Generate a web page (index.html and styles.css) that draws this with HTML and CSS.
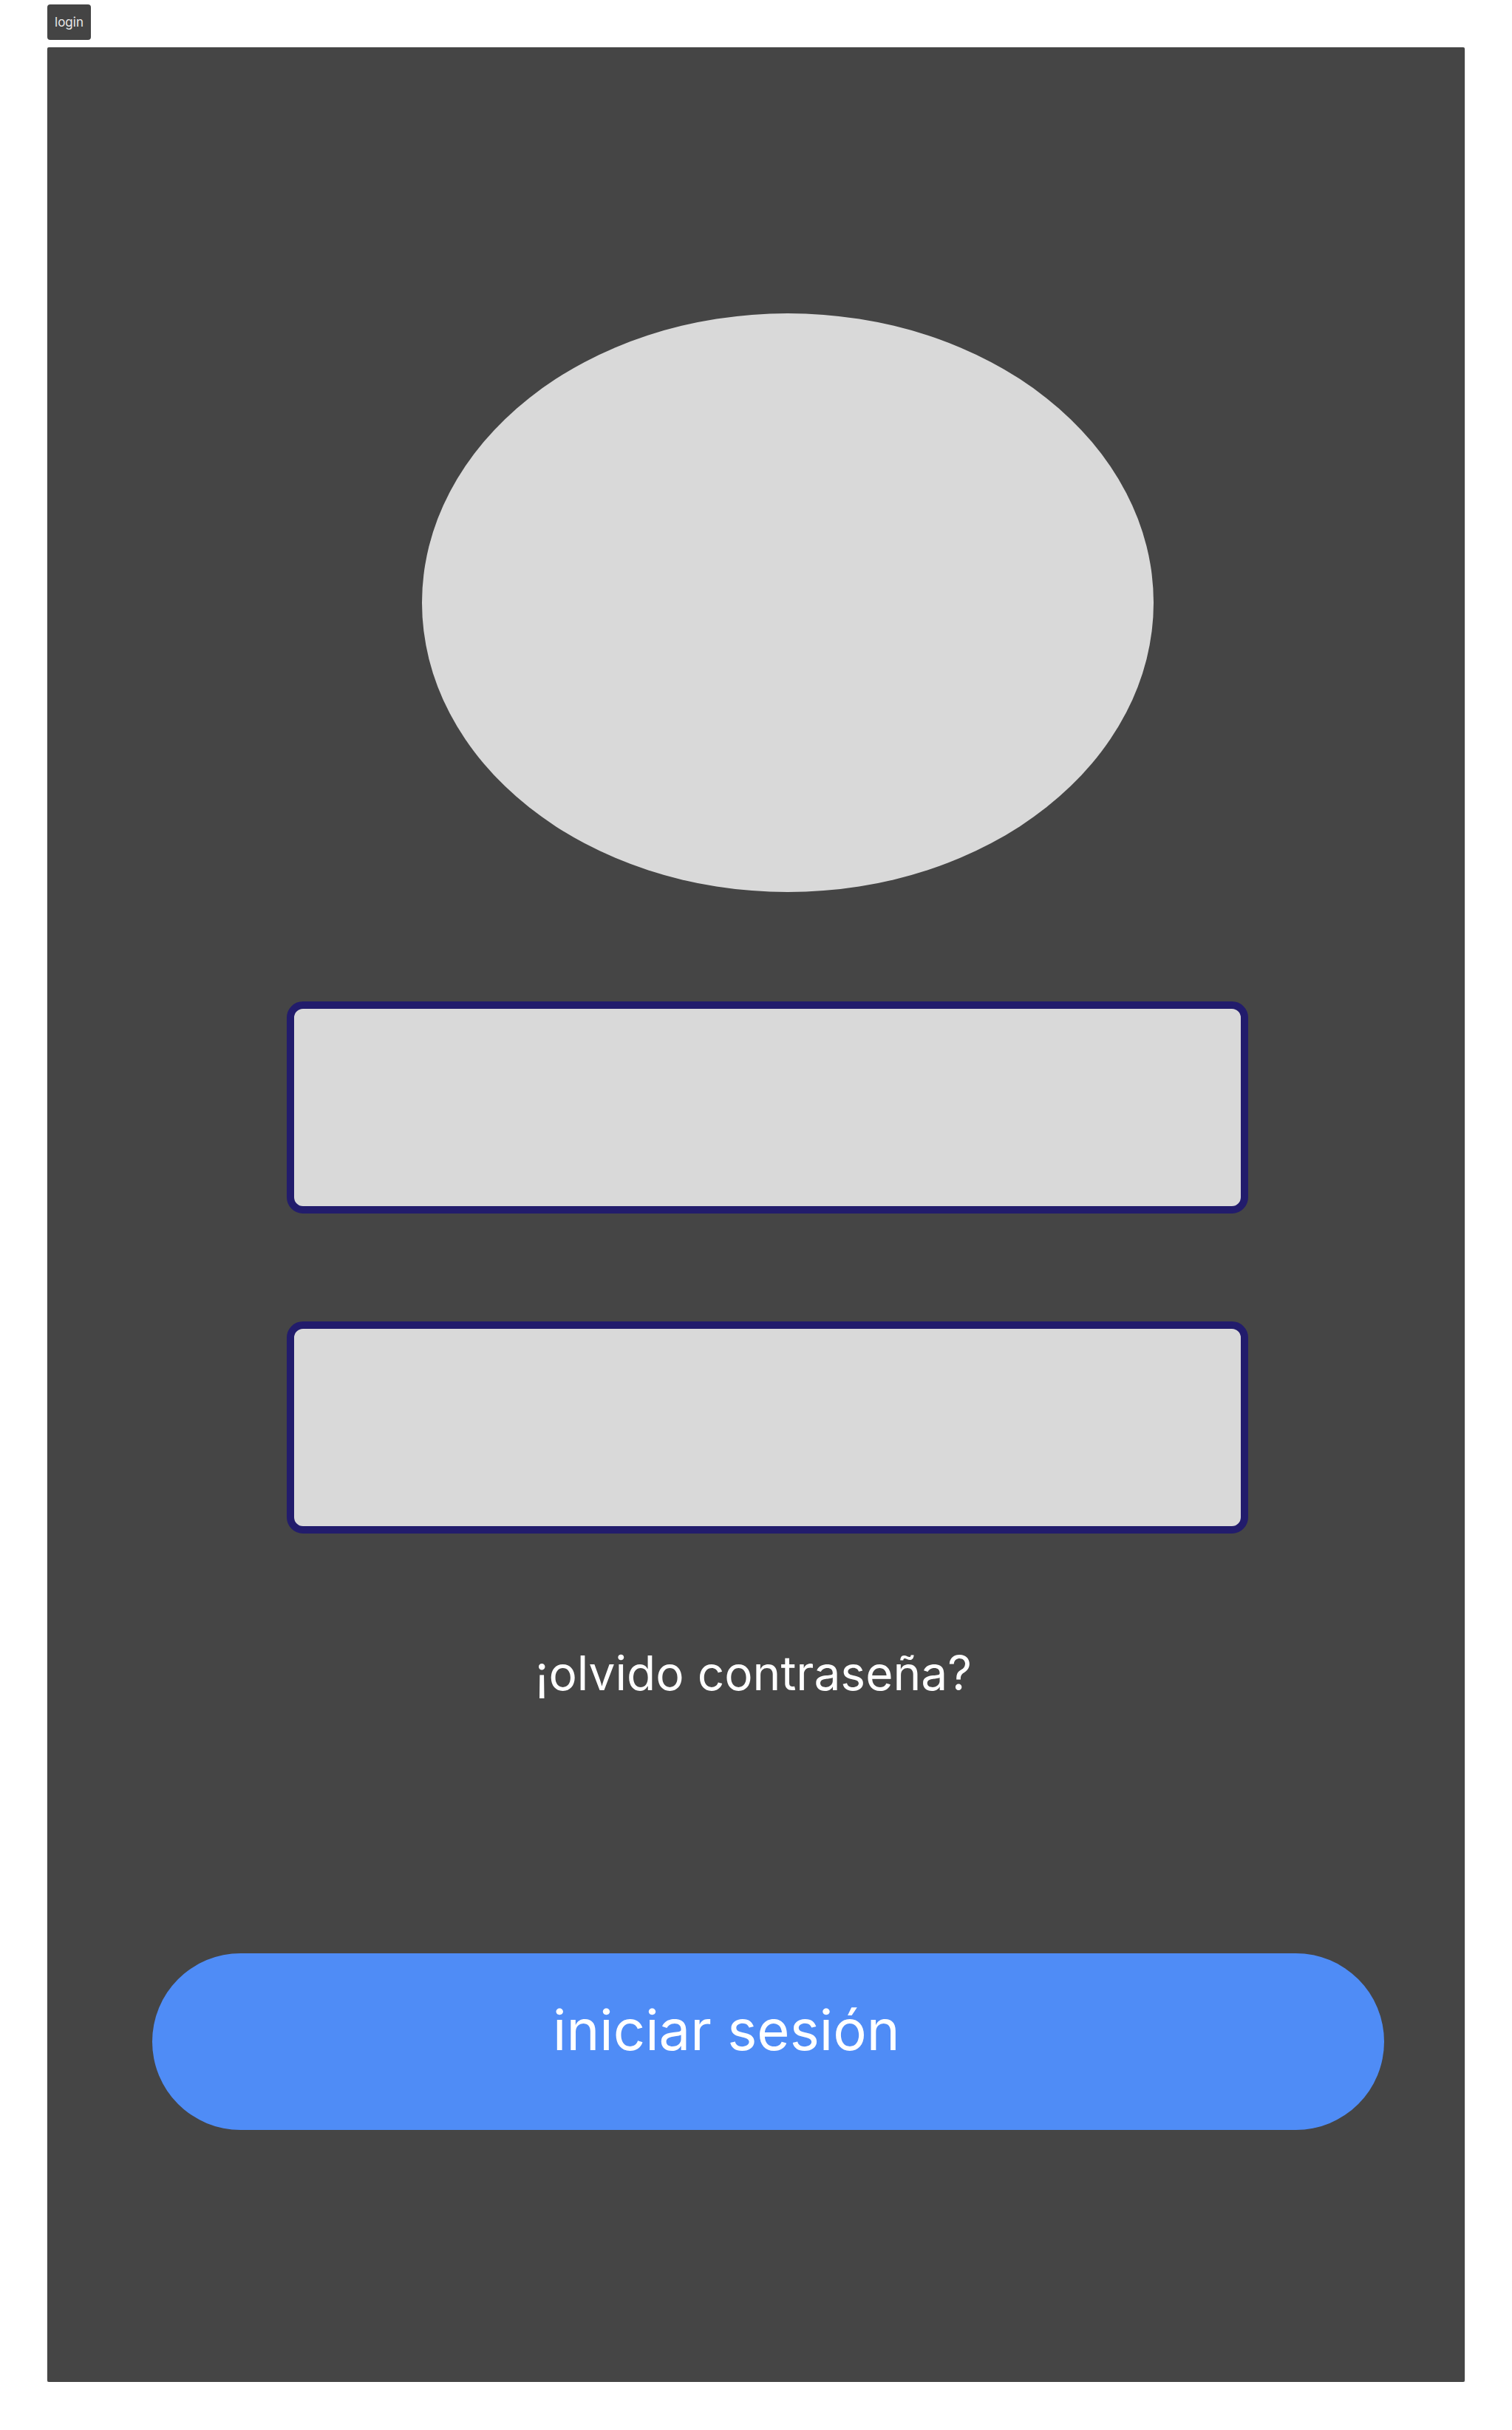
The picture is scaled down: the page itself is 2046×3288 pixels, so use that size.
FILE: index.html
```html
<!DOCTYPE html>
<html lang="es">
<head>
<meta charset="utf-8">
<title>login</title>
<link rel="stylesheet" href="styles.css">
</head>
<body>
  <div class="tag">login</div>
  <main class="frame">
    <div class="avatar"></div>
    <div class="field field-user"></div>
    <div class="field field-pass"></div>
    <a class="forgot">¡olvido contraseña?</a>
    <div class="btn"><span class="btn-label">iniciar sesión</span></div>
  </main>
</body>
</html>
```

FILE: styles.css
```css
html, body {
  margin: 0;
  background: #ffffff;
}
body {
  padding: 6px 0 0 64px;
  font-family: Inter, "Noto Sans", "Liberation Sans", sans-serif;
}
.tag {
  width: 59px;
  height: 48px;
  box-sizing: border-box;
  background: #444444;
  color: #e8e8e8;
  font-size: 17px;
  line-height: 48px;
  text-align: center;
  border-radius: 4px;
}
.frame {
  margin-top: 10px;
  width: 1918px;
  height: 3159px;
  box-sizing: border-box;
  background: #454545;
  border-radius: 2px;
  box-shadow: 0 1px 3px rgba(0,0,0,0.18);
  padding-top: 360px;
  display: flex;
  flex-direction: column;
  align-items: flex-start;
}
.avatar {
  margin-left: 507px;
  width: 990px;
  height: 783px;
  border-radius: 50%;
  background: #d9d9d9;
}
.field {
  margin-left: 324px;
  width: 1301px;
  height: 287px;
  box-sizing: border-box;
  background: #d9d9d9;
  border: 10px solid #221c6c;
  border-radius: 22px;
}
.field-user { margin-top: 148px; }
.field-pass { margin-top: 146px; }
.forgot {
  margin-top: 150px;
  margin-left: 660px;
  font-size: 64px;
  line-height: 78px;
  color: #ffffff;
}
.btn {
  margin-top: 340px;
  margin-left: 142px;
  width: 1667px;
  height: 239px;
  box-sizing: border-box;
  background: #4f8cf6;
  border-radius: 120px;
  padding: 58px 0 0 542px;
}
.btn-label {
  display: block;
  font-size: 76px;
  line-height: 90px;
  color: #ffffff;
}
```
